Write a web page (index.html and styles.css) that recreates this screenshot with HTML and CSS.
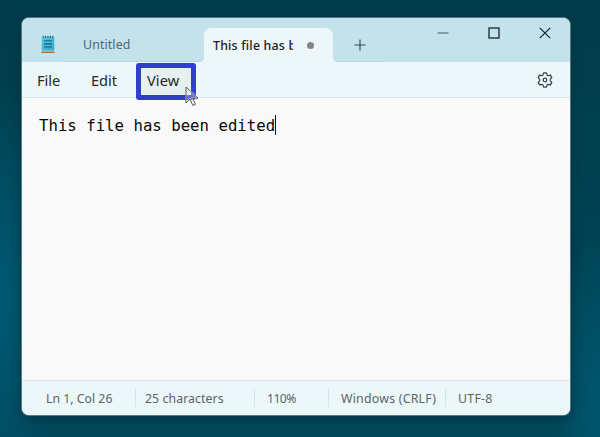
FILE: index.html
```
<!DOCTYPE html>
<html lang="en">
<head>
<meta charset="utf-8">
<title>Notepad</title>
<link rel="stylesheet" href="styles.css">
</head>
<body>
<main class="window">
  <header class="titlebar">
    <svg class="app-icon" viewBox="0 0 14 19" width="14" height="19">
      <defs><linearGradient id="page" x1="0" y1="0" x2="1" y2="1"><stop offset="0" stop-color="#55c9e2"/><stop offset="1" stop-color="#2ba9cc"/></linearGradient></defs>
      <path fill="#f4f4ee" d="M.5 15.2h13v1.5H.5z"/>
      <path fill="#b75c16" d="M.3 16.5h13.4v1.4H.3z"/>
      <path fill="url(#page)" d="M.7 2h12.6v13.7H.7z"/>
      <path stroke="#17617c" stroke-width="1.1" d="M3 5.8h8M3 8.9h8M3 12h8"/>
      <path stroke="#164f69" stroke-width="1.1" d="M2.2.8v1.8M4.6.8v1.8M7 .8v1.8M9.4.8v1.8M11.8.8v1.8"/>
    </svg>
    <div class="tab"><span class="tab-name">Untitled</span></div>
    <div class="tab active"><span class="tab-name">This file has been edited</span><i class="dirty"></i></div>
    <div class="new-tab">
      <svg width="12" height="12" viewBox="0 0 12 12"><path d="M6 .5v11M.5 6h11" stroke="#30434b" stroke-width="1.1"/></svg>
    </div>
    <div class="controls">
      <svg width="12" height="12" viewBox="0 0 12 12"><path d="M.5 6h11" stroke="#64777f" stroke-width="1.3"/></svg>
      <svg width="12" height="12" viewBox="0 0 12 12"><rect x="1" y="1" width="10" height="10" fill="none" stroke="#17242a" stroke-width="1.3"/></svg>
      <svg width="12" height="12" viewBox="0 0 12 12"><path d="M.8.8l10.4 10.4M11.2.8L.8 11.2" stroke="#17242a" stroke-width="1.2"/></svg>
    </div>
  </header>
  <nav class="menubar">
    <span class="menu file">File</span>
    <span class="menu edit">Edit</span>
    <span class="menu view">View
      <svg class="cursor" width="15" height="22" viewBox="0 0 15 22"><path d="M1 1v16l4-3.8 2.8 6.3 2.7-1.2-2.8-6.1h5.4z" fill="none" stroke="#fff" stroke-opacity=".5" stroke-width="2"/><path d="M1 1v16l4-3.8 2.8 6.3 2.7-1.2-2.8-6.1h5.4z" fill="#fff" fill-opacity=".25" stroke="#444" stroke-width=".9"/></svg>
    </span>
    <svg class="gear" width="16" height="16" viewBox="0 0 16 16" fill="none" stroke="#333e43" stroke-width="1.2" stroke-linejoin="round"><path d="M6.6.8h2.8l.6 2.1 1.3.8 2.1-.6 1.4 2.5-1.5 1.5v1.8l1.5 1.5-1.4 2.5-2.1-.6-1.3.8-.6 2.1H6.6L6 13.1l-1.3-.8-2.1.6-1.4-2.5 1.5-1.5V7.1L1.2 5.6l1.4-2.5 2.1.6L6 2.9z"/><circle cx="8" cy="8" r="1.8"/></svg>
  </nav>
  <section class="editor"><span class="content">This file has been edited</span><i class="caret"></i></section>
  <footer class="statusbar">
    <span class="cell position">Ln 1, Col 26</span>
    <span class="cell count">25 characters</span>
    <span class="cell zoom">110%</span>
    <span class="cell ending">Windows (CRLF)</span>
    <span class="cell encoding">UTF-8</span>
  </footer>
</main>
</body>
</html>
```
FILE: styles.css
```
* { box-sizing: border-box; }
body {
  margin: 0;
  height: 437px;
  padding: 18px 30px 22px 22px;
  overflow: hidden;
  font-family: "Noto Sans", sans-serif;
  background:
    radial-gradient(ellipse 60px 220px at 0 300px, #005a75, transparent),
    radial-gradient(ellipse 50px 180px at 100% 410px, #005770, transparent),
    linear-gradient(#003c4b, #00404f 30%, #004456 65%, #00475a);
}
svg { display: block; flex: none; }
.window {
  display: flex;
  flex-direction: column;
  width: 548px;
  height: 397px;
  border-radius: 7px;
  background: #f9f9f9;
  box-shadow: 0 0 0 1px #527b83, 0 3px 12px #00202d80;
}
.titlebar {
  display: flex;
  height: 44px;
  border-radius: 7px 7px 0 0;
  background: #c4e2ec;
}
.app-icon { margin: 17px 0 0 19px; }
.tab {
  display: flex;
  align-items: center;
  width: 138px;
  margin: 10px 0 0 11px;
  padding-left: 17px;
  border-bottom: 1px solid #b6d5de;
  color: #53676f;
  font-size: 12.4px;
  letter-spacing: .1px;
}
.tab-name { overflow: hidden; white-space: nowrap; }
.tab.active {
  position: relative;
  width: 129px;
  margin-left: 0;
  padding-left: 9px;
  border: 0;
  border-radius: 7px 7px 0 0;
  background: #edf6f9;
  color: #182327;
  font-weight: 500;
}
.tab.active::before, .tab.active::after {
  content: "";
  position: absolute;
  bottom: 0;
  width: 4px;
  height: 4px;
}
.tab.active::before { left: -4px; background: radial-gradient(circle at 0 0, transparent 3.5px, #edf6f9 4px); }
.tab.active::after { right: -4px; background: radial-gradient(circle at 100% 0, transparent 3.5px, #edf6f9 4px); }
.active .tab-name { width: 80px; letter-spacing: .18px; }
.dirty { width: 7px; height: 7px; margin-left: 14px; border-radius: 50%; background: #81888b; }
.new-tab { width: 46px; margin-left: 4px; padding: 21px 0 0 17px; border-bottom: 1px solid #b6d5de; }
.controls { display: flex; gap: 39px; margin: 9px 0 0 54px; }
.menubar {
  display: flex;
  height: 36px;
  border-bottom: 1px solid #dae7ea;
  background: #edf6f9;
  color: #20292d;
  font-size: 14.6px;
  line-height: 36px;
}
.file { width: 54px; padding-left: 15px; }
.edit { width: 61px; padding-left: 15px; }
.view {
  position: relative;
  width: 60px;
  height: 37px;
  margin: 1px 0 0 -1px;
  padding-left: 6px;
  border: 5px solid #303fca;
  border-radius: 3px;
  background: #e6eff2;
  line-height: 24px;
  letter-spacing: .1px;
}
.cursor { position: absolute; left: 44px; top: 18px; }
.gear { margin: 10px 17px 0 auto; }
.editor {
  display: flex;
  flex: 1;
  padding: 18px 0 0 17px;
  color: #080808;
  font: 15.7px/21px "DejaVu Sans Mono", monospace;
}
.content { margin-top: -1px; }
.caret { width: 1px; height: 20px; margin-top: -1px; background: #111; }
.statusbar {
  display: flex;
  align-items: center;
  height: 35px;
  border-top: 1px solid #dae7ea;
  border-radius: 0 0 7px 7px;
  background: #edf6f9;
  color: #596568;
  font-size: 12.3px;
  white-space: nowrap;
}
.cell { height: 18px; line-height: 19px; border-right: 1px solid #d8e2e5; }
.position { width: 114px; padding-left: 24px; }
.count { width: 119px; padding-left: 9px; letter-spacing: .08px; }
.zoom { width: 74px; padding-left: 12px; letter-spacing: -.6px; }
.ending { width: 117px; padding-left: 12px; letter-spacing: .25px; }
.encoding { padding-left: 12px; border: 0; letter-spacing: .3px; }
```
